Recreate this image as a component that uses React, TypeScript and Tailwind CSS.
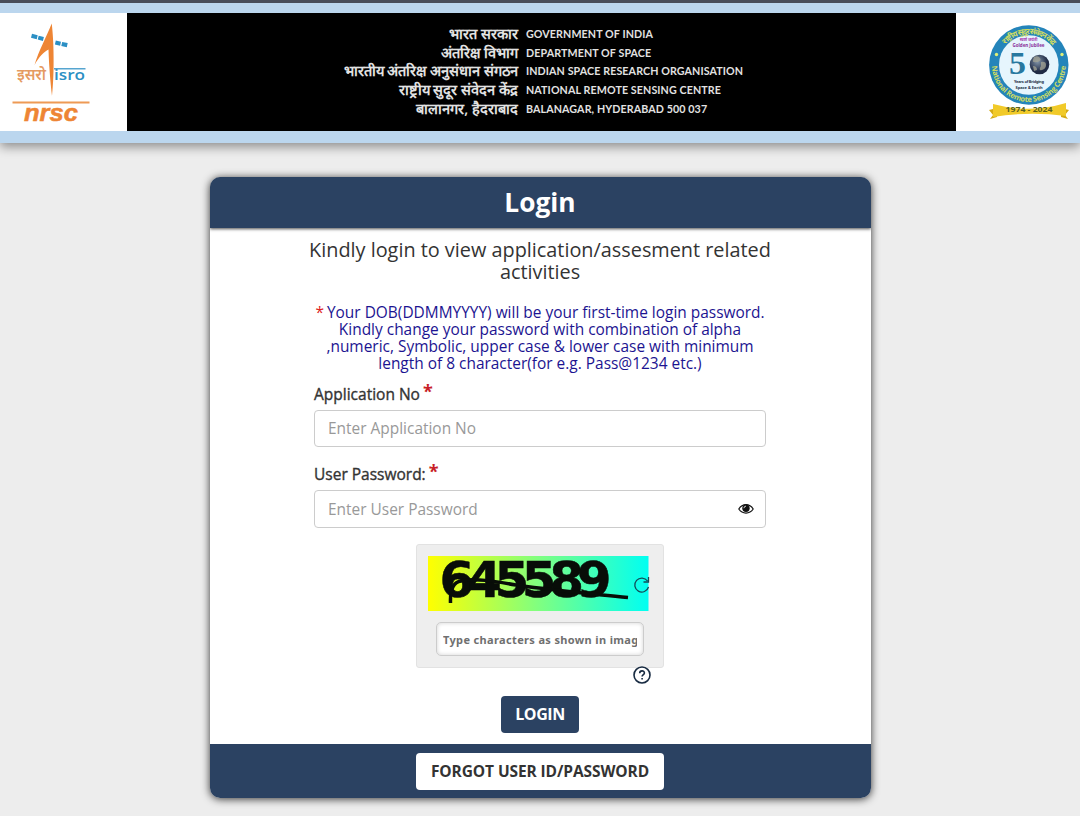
import React from "react";

const lines: [string, string][] = [
  ["भारत सरकार", "GOVERNMENT OF INDIA"],
  ["अंतरिक्ष विभाग", "DEPARTMENT OF SPACE"],
  ["भारतीय अंतरिक्ष अनुसंधान संगठन", "INDIAN SPACE RESEARCH ORGANISATION"],
  ["राष्ट्रीय सुदूर संवेदन केंद्र", "NATIONAL REMOTE SENSING CENTRE"],
  ["बालानगर, हैदराबाद", "BALANAGAR, HYDERABAD 500 037"],
];

function IsroLogo() {
  return (
    <svg width="127" height="118" viewBox="0 13 127 118" className="block">
      <path d="M51.700 23.500 C46.500 37 39 50 34.500 65 C39 57 44 51.500 48.500 49.500 C49 66 50.500 83 52 96 C54 80 54.500 46 51.700 23.500Z" fill="#ee8534" />
      <g fill="#2b8fc4">
        <path d="M32 33.800l5.700 1.400-1 4-5.700-1.500zM38.700 35.800l5.200 1.300-1 3.900-5.200-1.400zM55.800 40.500l5.200 1.200-.9 4-5.200-1.200zM62.200 41.900l5.500 1.200-.9 4.200-5.500-1.200z" />
      </g>
      <text x="17" y="79.500" fontSize="16" fontWeight="600" textLength="29" lengthAdjust="spacingAndGlyphs" fill="#e59a62" fontFamily="'Noto Sans', 'Noto Sans Devanagari', sans-serif">इसरो</text>
      <path d="M54 68.800h31.500" stroke="#2b8fc4" strokeWidth="1.200" />
      <text x="54" y="79.500" fontSize="14.500" fontWeight="600" textLength="31" lengthAdjust="spacingAndGlyphs" fill="#2b8fc4" fontFamily="'Open Sans', sans-serif">isro</text>
      <path d="M12.500 102.500h77" stroke="#ee9a55" strokeWidth="2" />
      <text x="24" y="121" fontSize="23" fontWeight="700" fontStyle="italic" textLength="54" lengthAdjust="spacingAndGlyphs" fill="#ee8534" stroke="#ee8534" strokeWidth=".5" fontFamily="'Liberation Sans', sans-serif">nrsc</text>
    </svg>
  );
}

function JubileeLogo() {
  return (
    <svg width="124" height="118" viewBox="956 13 124 118" className="block">
      <defs>
        <path id="ringTop" d="M997.500 65 A31 31 0 0 1 1059.500 65" />
        <path id="ringBottom" d="M991.800 65 A37 37 0 0 0 1065.800 65" />
        <radialGradient id="earth" cx="0.4" cy="0.35">
          <stop offset="0" stopColor="#8395a8" />
          <stop offset="1" stopColor="#202b45" />
        </radialGradient>
      </defs>
      <circle cx="1028.800" cy="65" r="39.700" fill="#2484ba" />
      <circle cx="1028.800" cy="65" r="29.800" fill="#e6f5fd" />
      <text fontSize="8" fontWeight="700" fill="#cfdc62" fontFamily="'Noto Sans', sans-serif">
        <textPath href="#ringTop" startOffset="48.700" textAnchor="middle" textLength="54">राष्ट्रीय सुदूर संवेदन केंद्र</textPath>
      </text>
      <text fontSize="7.400" fontWeight="700" fill="#cfdc62" fontFamily="'Open Sans', sans-serif">
        <textPath href="#ringBottom" startOffset="58.100" textAnchor="middle" textLength="114">National Remote Sensing Centre</textPath>
      </text>
      <circle cx="996.500" cy="54.500" r="1.700" fill="#e0ef76" />
      <circle cx="1062" cy="54.500" r="1.700" fill="#e0ef76" />
      <g textAnchor="middle" fontWeight="700" fontFamily="'Noto Sans', sans-serif">
        <text x="1028.500" y="41" fontSize="4" fill="#a83ab0">स्वर्ण जयंती</text>
        <text x="1028.500" y="46.500" fontSize="4.500" textLength="32" fill="#8a2f9a">Golden Jubilee</text>
        <text x="1029" y="83" fontSize="4" textLength="30" fill="#26344a">Years of Bridging</text>
        <text x="1029" y="89" fontSize="4" textLength="27" fill="#26344a">Space &amp; Earth</text>
      </g>
      <text x="1009" y="74" fontSize="31" fontWeight="700" textLength="17" lengthAdjust="spacingAndGlyphs" fill="#28789f" fontFamily="'Liberation Serif', serif">5</text>
      <circle cx="1039.500" cy="64.500" r="9.800" fill="url(#earth)" />
      <path d="M1034 57q4-2 6 1t-3 4-4-2zm7 5q5-1 5 3t-4 5-1-4zm-8 4q4 0 4 4l-3 1z" fill="#a6a596" opacity=".75" />
      <path d="M989 110l8-2v9l-7 2 3-4zM1069 110l-8-2v9l7 2-3-4z" fill="#d4aa15" />
      <path d="M993 104q36 10 73-1v13q-37-5-73 1z" fill="#f1ca29" />
      <text x="1029" y="111.800" textAnchor="middle" fontSize="7" fontWeight="700" textLength="47" lengthAdjust="spacingAndGlyphs" fill="#586020" fontFamily="'Open Sans', sans-serif">1974 - 2024</text>
    </svg>
  );
}

function EyeIcon() {
  return (
    <svg width="16" height="12" viewBox="0 0 16 12" className="shrink-0">
      <path d="M.8 6C4.500.2 11.500.2 15.200 6 11.500 11.400 4.500 11.400.8 6Z" fill="#fff" stroke="#111" strokeWidth="1.200" />
      <circle cx="8" cy="5.200" r="3.700" fill="#111" />
      <path d="M5.900 5.200A2.200 2.200 0 0 1 8 3.100" fill="none" stroke="#fff" strokeWidth=".8" />
    </svg>
  );
}

export default function App() {
  return (
    <div className="h-[816px] w-[1080px] overflow-hidden bg-[#ededed] font-['Open_Sans',sans-serif] text-[#333]">
      <header className="h-[143px] border-t-[3px] border-[#484d5a] bg-[#bbd6ee] pt-[9.500px] shadow-[0_4px_10px_rgba(0,0,0,0.4)]">
        <div className="flex h-[118.500px] bg-white">
          <div className="w-[127px] shrink-0"><IsroLogo /></div>
          <div className="w-[829px] shrink-0 bg-black pt-[12px] text-[#e2e2e2]">
            {lines.map(([hi, en]) => (
              <div key={en} className="flex h-[18.700px] items-center whitespace-nowrap leading-[18.700px]">
                <span className="mr-[8px] w-[391px] pb-[1px] text-right text-[14.600px] font-semibold">{hi}</span>
                <span className="pt-[1px] font-['Lato',sans-serif] text-[10.700px] font-bold tracking-[0.100px]">{en}</span>
              </div>
            ))}
          </div>
          <div className="w-[124px] shrink-0"><JubileeLogo /></div>
        </div>
      </header>
      <main className="mx-auto mt-[34px] flex h-[621px] w-[661px] flex-col overflow-hidden rounded-[10px] bg-white shadow-[0_1px_8px_rgba(0,0,0,0.8)]">
        <h1 className="z-10 h-[51px] shrink-0 bg-[#2b4262] text-center text-[26.300px] font-bold leading-[51px] text-white shadow-[0_1px_3px_rgba(0,0,0,0.7)]">Login</h1>
        <div className="flex h-[515.500px] shrink-0 flex-col items-center">
          <p className="mt-[11px] whitespace-nowrap text-center text-[19.850px] leading-[22px]">Kindly login to view application/assesment related<br />activities</p>
          <p className="mt-[21px] whitespace-nowrap text-center text-[15.440px] leading-[17px] text-[#1c1491]">
            <span className="mr-[3px] text-[#d22]">*</span>Your DOB(DDMMYYYY) will be your first-time login password.<br />
            Kindly change your password with combination of alpha<br />
            ,numeric, Symbolic, upper case &amp; lower case with minimum<br />
            length of 8 character(for e.g. Pass@1234 etc.)
          </p>
          <form className="flex w-[452px] flex-col" onSubmit={(e) => e.preventDefault()}>
            <label className="mt-[12px] flex h-[20px] text-[15.500px] leading-[20px] [-webkit-text-stroke:0.350px_#333]">Application No<span className="-mt-[3px] ml-[3px] text-[18px] font-bold text-[#c81e28] [-webkit-text-stroke:0]">*</span></label>
            <input className="mt-[6px] h-[37px] rounded-[4px] border border-[#ccc] px-[13px] pb-[2px] text-[15.440px] placeholder-[#999] outline-none" placeholder="Enter Application No" />
            <label className="mt-[17px] flex h-[20px] text-[15.500px] leading-[20px] [-webkit-text-stroke:0.350px_#333]">User Password:<span className="-mt-[3px] ml-[3px] text-[18px] font-bold text-[#c81e28] [-webkit-text-stroke:0]">*</span></label>
            <div className="mt-[6px] flex h-[38px] items-center rounded-[4px] border border-[#ccc] pl-[13px] pr-[11px]">
              <input type="password" className="grow pt-[1px] text-[15.440px] placeholder-[#999] outline-none" placeholder="Enter User Password" />
              <EyeIcon />
            </div>
          </form>
          <div className="mt-[16px] flex h-[124px] w-[248px] shrink-0 flex-col items-center rounded-[3px] border border-[#e2e2e2] bg-[#eee] pt-[11px]">
            <svg width="224" height="55" viewBox="0 0 224 55">
              <defs><linearGradient id="captcha"><stop offset="0" stopColor="#ff0" /><stop offset=".5" stopColor="#80ff80" /><stop offset="1" stopColor="#00fff2" /></linearGradient></defs>
              <rect width="220.500" height="55" fill="url(#captcha)" />
              <text x="11.500" y="40.500" fontSize="50" fontWeight="700" textLength="172" fill="#080d08" stroke="#080d08" strokeWidth=".5" fontFamily="'DejaVu Sans', sans-serif">645589</text>
              <path d="M22.500 47 C22 33 26 26 33 25 C47 22 65 25 88 29 C130 35 145 36 200 41.500" fill="none" stroke="#080d08" strokeWidth="3.500" />
              <path d="M219.500 25 A7 7 0 1 0 220.500 31 M220.500 21v5h-5" fill="none" stroke="#124c58" strokeWidth="1.300" />
            </svg>
            <input className="mt-[11px] h-[34px] w-[208px] rounded-[5px] border border-[#ccc] bg-white px-[6px] font-['Noto_Sans',sans-serif] text-[11px] font-bold tracking-[0.350px] placeholder-[#707070] shadow-[inset_0_0_4px_rgba(0,0,0,0.18)] outline-none" placeholder="Type characters as shown in image" />
          </div>
          <svg width="18" height="18" viewBox="0 0 18 18" className="-mt-[2px] ml-[204px] shrink-0">
            <circle cx="9" cy="9" r="8" fill="#fff" stroke="#182b42" strokeWidth="1.600" />
            <path d="M6.700 7.200c0-3 4.700-3 4.700-.3 0 1.600-2.300 1.700-2.300 3.600M9.100 12.100v1.300" fill="none" stroke="#182b42" strokeWidth="1.600" />
          </svg>
          <button className="mt-[12px] h-[37px] w-[78px] shrink-0 rounded-[4px] bg-[#2b4262] pb-[2px] text-[16px] font-bold tracking-[-0.450px] text-white">LOGIN</button>
        </div>
        <footer className="flex h-[54.500px] shrink-0 items-center justify-center bg-[#2b4262] pt-[1px]">
          <button className="h-[37px] w-[248px] rounded-[4px] bg-white text-[15.500px] font-bold tracking-[-0.100px]">FORGOT USER ID/PASSWORD</button>
        </footer>
      </main>
    </div>
  );
}
